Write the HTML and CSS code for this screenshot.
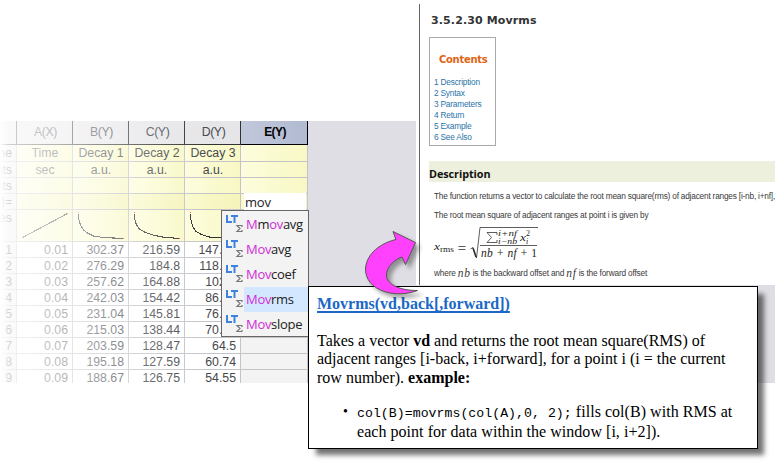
FILE: index.html
```
<!DOCTYPE html>
<html lang="en">
<head>
<meta charset="utf-8">
<title>Movrms</title>
<link rel="stylesheet" href="styles.css">
</head>
<body>
<div class="stage">
  <section class="sheet">
    <div class="row head"><div class="c"></div><div class="c">A(X)</div><div class="c">B(Y)</div><div class="c">C(Y)</div><div class="c">D(Y)</div><div class="c sel">E(Y)</div></div>
    <div class="row label name"><div class="c">ne</div><div class="c">Time</div><div class="c">Decay 1</div><div class="c">Decay 2</div><div class="c">Decay 3</div><div class="c"></div></div>
    <div class="row label"><div class="c">its</div><div class="c">sec</div><div class="c">a.u.</div><div class="c">a.u.</div><div class="c">a.u.</div><div class="c"></div></div>
    <div class="row label"><div class="c">nts</div><div class="c"></div><div class="c"></div><div class="c"></div><div class="c"></div><div class="c"></div></div>
    <div class="row label formula"><div class="c">)=</div><div class="c"></div><div class="c"></div><div class="c"></div><div class="c"></div><div class="c entry"><span>mov</span></div></div>
    <div class="row label spark"><div class="c">es</div>
      <div class="c"><svg width="55" height="31"><path d="M5.500 27.500L50.500 3.500"/><path class="dot" d="M5 27.500h1M50 3.500h1"/></svg></div>
      <div class="c"><svg width="55" height="31"><path d="M5.500 3.500V8L7.500 15L10.500 20L14.500 23L20.500 26L30 27.500L50.500 28.500"/><path class="dot" d="M5 2.500h1M50 28.500h1"/></svg></div>
      <div class="c"><svg width="55" height="31"><path d="M5.500 3.500V8L7.500 15L10.500 19L16.500 22.500L24 25L33 27L50.500 28.500"/><path class="dot" d="M5 2.500h1M50 28.500h1"/></svg></div>
      <div class="c"><svg width="55" height="31"><path d="M5.500 3.500V8L7.500 16L10.500 21L16.500 24.500L24 27L33 27.500L50.500 27.500"/><path class="dot" d="M5 2.500h1"/></svg></div>
      <div class="c"></div></div>
    <div class="row data"><div class="c">1</div><div class="c">0.01</div><div class="c">302.37</div><div class="c">216.59</div><div class="c">147.38</div><div class="c"></div></div>
    <div class="row data"><div class="c">2</div><div class="c">0.02</div><div class="c">276.29</div><div class="c">184.8</div><div class="c">118.25</div><div class="c"></div></div>
    <div class="row data"><div class="c">3</div><div class="c">0.03</div><div class="c">257.62</div><div class="c">164.88</div><div class="c">102.3</div><div class="c"></div></div>
    <div class="row data"><div class="c">4</div><div class="c">0.04</div><div class="c">242.03</div><div class="c">154.42</div><div class="c">86.15</div><div class="c"></div></div>
    <div class="row data"><div class="c">5</div><div class="c">0.05</div><div class="c">231.04</div><div class="c">145.81</div><div class="c">76.42</div><div class="c"></div></div>
    <div class="row data"><div class="c">6</div><div class="c">0.06</div><div class="c">215.03</div><div class="c">138.44</div><div class="c">70.21</div><div class="c"></div></div>
    <div class="row data"><div class="c">7</div><div class="c">0.07</div><div class="c">203.59</div><div class="c">128.47</div><div class="c">64.5</div><div class="c"></div></div>
    <div class="row data"><div class="c">8</div><div class="c">0.08</div><div class="c">195.18</div><div class="c">127.59</div><div class="c">60.74</div><div class="c"></div></div>
    <div class="row data last"><div class="c">9</div><div class="c">0.09</div><div class="c">188.67</div><div class="c">126.75</div><div class="c">54.55</div><div class="c"></div></div>
    <div class="fade"></div>
  </section>

  <article class="doc">
    <h1>3.5.2.30 Movrms</h1>
    <nav class="toc">
      <h2>Contents</h2>
      <ul><li>1 Description</li><li>2 Syntax</li><li>3 Parameters</li><li>4 Return</li><li>5 Example</li><li>6 See Also</li></ul>
    </nav>
    <h3>Description</h3>
    <p class="p1">The function returns a vector to calculate the root mean square(rms) of adjacent ranges [i-nb, i+nf],</p>
    <p class="p2">The root mean square of adjacent ranges at point i is given by</p>
    <svg class="math" width="106" height="36">
      <text x="0" y="23" font-size="11" class="i" textLength="6" lengthAdjust="spacingAndGlyphs">x</text><text x="6" y="25" font-size="8" textLength="14" lengthAdjust="spacingAndGlyphs">rms</text>
      <path d="M24.500 19.500h7M24.500 22.500h7M46 18.500h57"/>
      <path d="M36.500 22L39 20.500L42.500 31L46 .5H104"/><path class="thick" d="M39 21L42 30"/>
      <path d="M63 8V5.500H53L57.500 10.500L53 15.500H63V13"/>
      <text x="64" y="9" font-size="8" class="i" textLength="19" lengthAdjust="spacingAndGlyphs">i+nf</text><text x="64" y="17" font-size="8" class="i" textLength="19" lengthAdjust="spacingAndGlyphs">i−nb</text>
      <text x="86" y="14" font-size="11" class="i" textLength="6" lengthAdjust="spacingAndGlyphs">x</text><text x="92" y="9" font-size="8">2</text><text x="92" y="17" font-size="8" class="i">i</text>
      <text x="47" y="30" font-size="11.500" class="i" textLength="56"><tspan>nb + nf + </tspan><tspan font-style="normal">1</tspan></text>
    </svg>
    <p class="p3">where <i class="nb">nb</i> is the backward offset and <i class="nf">nf</i> is the forward offset</p>
  </article>
</div>

<ul class="suggest">
  <li><svg width="17" height="17"><path class="lt" d="M1 -1V6H6M5 0H12M8.500 0V7"/><path class="sg" d="M16 11V9.500H11L14 12.500L11 15.500H16V14"/></svg><span><b>M</b>m<b>ov</b>avg</span></li>
  <li><svg width="17" height="17"><path class="lt" d="M1 -1V6H6M5 0H12M8.500 0V7"/><path class="sg" d="M16 11V9.500H11L14 12.500L11 15.500H16V14"/></svg><span><b>Mov</b>avg</span></li>
  <li><svg width="17" height="17"><path class="lt" d="M1 -1V6H6M5 0H12M8.500 0V7"/><path class="sg" d="M16 11V9.500H11L14 12.500L11 15.500H16V14"/></svg><span><b>Mov</b>coef</span></li>
  <li><svg width="17" height="17"><path class="lt" d="M1 -1V6H6M5 0H12M8.500 0V7"/><path class="sg" d="M16 11V9.500H11L14 12.500L11 15.500H16V14"/></svg><span class="on"><b>Mov</b>rms</span></li>
  <li><svg width="17" height="17"><path class="lt" d="M1 -1V6H6M5 0H12M8.500 0V7"/><path class="sg" d="M16 11V9.500H11L14 12.500L11 15.500H16V14"/></svg><span><b>Mov</b>slope</span></li>
</ul>

<aside class="tip">
  <a>Movrms(vd,back[,forward])</a>
  <p>Takes a vector <b>vd</b> and returns the root mean square(RMS) of<br>adjacent ranges [i-back, i+forward], for a point i (i = the current<br>row number). <b>example:</b></p>
  <ul><li><code>col(B)=movrms(col(A),0, 2);</code> fills col(B) with RMS at<br>each point for data within the window [i, i+2]).</li></ul>
</aside>

<svg class="arrow" width="80" height="90"><path d="M43 21.500L65.500 32.500L55.500 54.500L52 47C44 50 36 57 36.500 66C37 73 47 80.500 67.500 80.500C58 84 46 85 36 82C22 78 15 69 15.500 58C17 43 31 33 46 29.500Z"/></svg>
</body>
</html>
```
FILE: styles.css
```
* { box-sizing: border-box; }
body { margin: 0; width: 775px; height: 462px; background: #fff; overflow: hidden; position: relative; font-family: "Liberation Sans", Arial, sans-serif; }
h1, h2, h3, p, ul { margin: 0; padding: 0; }
ul { list-style: none; }

.stage { display: flex; height: 383px; padding-top: 4px; background: linear-gradient(#fff 0 121px, #dfdee4 121px); }
.sheet { width: 415px; margin-top: 117px; position: relative; flex: none; background: #dfdee4; overflow: hidden; }
.row { display: grid; grid-template-columns: 17px 56px 56px 56px 56px 67px; grid-template-rows: 100%; height: 16px; font-size: 12.3px; line-height: 16px; color: #47474c; }
.c { border-right: 1px solid #c4c4c8; border-bottom: 1px solid #c4c4c8; text-align: center; white-space: nowrap; padding-left: 1px; }
.c:first-child { background: #ececef; display: flex; justify-content: flex-end; padding: 0 4px 0 0; }
.head { height: 24px; line-height: 22px; font-size: 12.3px; letter-spacing: -.4px; }
.head .c { background: #e6e6e9; border-color: #333; padding-left: 2px; }
.head .sel { background: linear-gradient(90deg, #c2c8dc, #b0bad0); color: #000; font-weight: bold; border-color: #000; font-size: 12px; padding-left: 2px; letter-spacing: -.6px; }
.label .c:not(:first-child) { background: linear-gradient(90deg, #fdfddc, #f8f8c6); }
.name { height: 17px; }
.formula .c:not(:first-child) { background: linear-gradient(90deg, #fafacd, #f5f4bb); }
.formula .entry { padding-left: 0; }
.formula .entry span { display: block; width: 62px; height: 18px; margin: -1px 0 0 3px; background: #fff; text-align: left; padding-left: 1px; color: #222; font: 13px/18px "Open Sans", sans-serif; letter-spacing: -.2px; position: relative; }
.spark { height: 32px; }
.spark .c { padding-left: 0; }
.spark .c:first-child { line-height: 17px; }
.spark svg { display: block; fill: none; stroke: #333; stroke-width: 1.100; shape-rendering: crispEdges; }
.spark .dot { stroke: #f44; }
.data .c:not(:first-child) { background: #fff; text-align: right; padding-right: 4px; }
.data .c:last-child:not(:first-child) { background: #f3f3f3; }
.last { height: 14px; }
.last .c { border-bottom: 0; }
.fade { position: absolute; inset: 0; background: linear-gradient(90deg, #fff 0, rgba(255,255,255,.76) 9px, rgba(255,255,255,.62) 60px, rgba(255,255,255,.38) 115px, rgba(255,255,255,.14) 170px, transparent 210px); }

.doc { flex: none; width: 360px; height: 281px; border-left: 1px solid #666; box-shadow: -3px 0 0 #fff; margin-left: 4px; background: #fff; overflow: hidden; padding-left: 9px; white-space: nowrap; color: #3a3a3a; }
.doc h1 { font: bold 11px/14px "DejaVu Sans", sans-serif; padding-top: 10px; height: 33px; margin-left: 2px; letter-spacing: .12px; color: #333; }
.toc { width: 67px; height: 109px; border: 1px solid #aaa; padding-left: 4px; }
.toc h2 { font: bold 10px/14px "DejaVu Sans", sans-serif; color: #de6414; padding: 15px 0 0 5px; height: 39px; letter-spacing: -.3px; }
.toc li { font-size: 8.3px; line-height: 11px; color: #2a74a8; letter-spacing: -.2px; }
.doc h3 { font: bold 10.8px/25px "Open Sans", sans-serif; height: 21px; background: #edf0dd; margin: 15px 0 0; color: #111; letter-spacing: -.05px; }
.doc p { font-size: 8.3px; line-height: 12px; margin-left: 5px; letter-spacing: -.21px; }
.doc .p1 { margin-top: 8px; }
.doc .p2 { margin-top: 7px; }
.math { display: block; margin: 6px 0 0 5px; overflow: visible; font-family: "Liberation Serif", serif; fill: #222; }
.math path { fill: none; stroke: #333; stroke-width: .8; }
.math .thick { stroke-width: 1.600; }
.math .i { font-style: italic; }
.doc .p3 { margin-top: 4px; letter-spacing: -.18px; }
.p3 i { font: italic 11.5px/10px "Liberation Serif", serif; letter-spacing: .6px; position: relative; top: 1px; }

.suggest { position: absolute; left: 221px; top: 210px; width: 88px; height: 127px; border: 1px solid #666; background: #f3f3f3; padding: 1px 0 0; }
.suggest li { display: flex; height: 25px; }
.suggest svg { width: 22px; flex: none; padding-left: 4px; height: 21px; padding-top: 4px; overflow: visible; }
.suggest span { flex: 1; white-space: nowrap; padding-left: 2px; font: 13px/25px "Open Sans", sans-serif; color: #222; letter-spacing: -.3px; }
.suggest b { font-weight: normal; color: #d02bd6; }
.suggest .on { background: #d3e8ff; }
.lt { fill: none; stroke: #3d82dc; stroke-width: 2; }
.sg { fill: none; stroke: #777; stroke-width: 1.200; }

.tip { position: absolute; left: 308px; top: 286px; width: 450px; height: 163px; border: 1px solid #000; background: #fff; box-shadow: 7px 7px 5px -1px rgba(0,0,0,.55); padding: 8px 0 0 8px; font: 16px/18.5px "Liberation Serif", serif; color: #000; white-space: nowrap; }
.tip a { display: block; font-weight: bold; color: #1b68c6; text-decoration: underline; text-decoration-thickness: 2px; text-underline-offset: 2px; text-decoration-skip-ink: none; }
.tip p { margin-top: 18px; }
.tip ul { padding-left: 40px; margin-top: 16px; }
.tip li { letter-spacing: .04px; }
.tip li::before { content: "•"; float: left; margin-left: -14px; font-size: 14px; }
.tip code { font: 13.2px/18px "Liberation Mono", monospace; }
.arrow { position: absolute; left: 350px; top: 210px; fill: #ff40fc; stroke: #555; filter: drop-shadow(4px 4px 2px rgba(0,0,0,.35)); }
```
